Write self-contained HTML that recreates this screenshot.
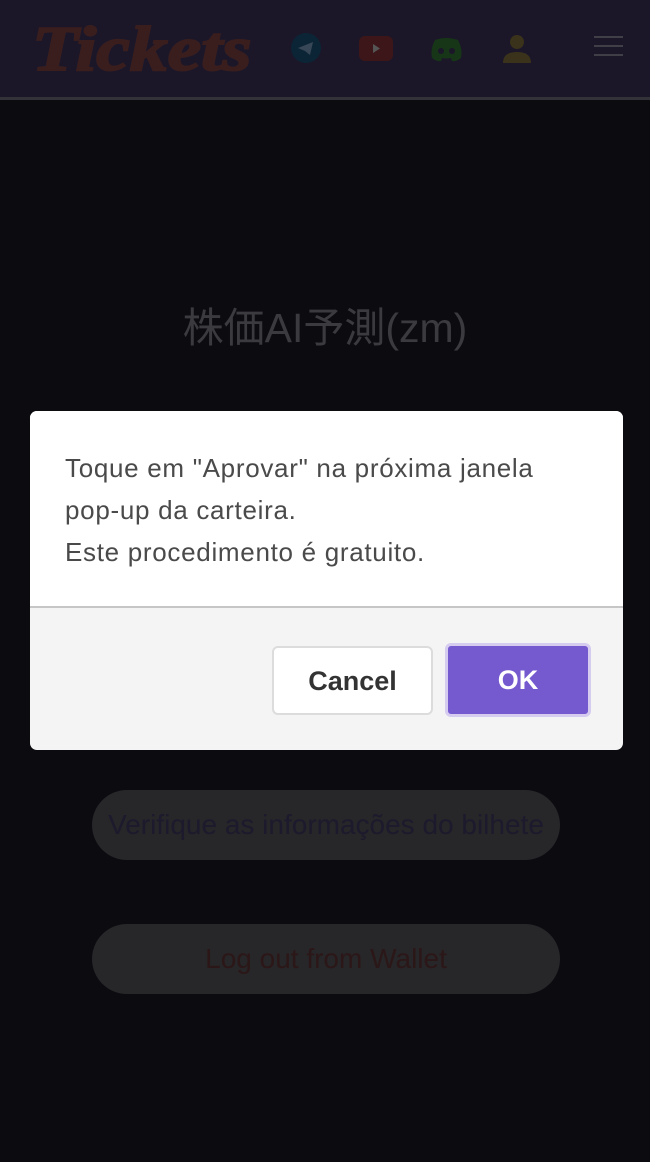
<!DOCTYPE html>
<html><head><meta charset="utf-8"><style>
*{margin:0;padding:0;box-sizing:border-box}
body{width:650px;height:1162px;background:#0c0b10;font-family:"Liberation Sans","Noto Sans CJK JP",sans-serif;position:relative;overflow:hidden}
.hdr{position:absolute;left:0;top:0;width:650px;height:100px;background:#1b1729;border-bottom:3px solid #333238}
.logo{position:absolute;left:32px;top:12px;font-family:"Liberation Serif",serif;font-weight:bold;font-style:italic;font-size:64px;color:#3a1e1e;transform:scaleX(1.18);transform-origin:left;-webkit-text-stroke:2px #3a1e1e}
.title{position:absolute;top:294px;width:650px;text-align:center;font-size:41px;color:#3b3b3f}
.pill{position:absolute;left:92px;width:468px;height:70px;border-radius:35px;background:#272629;text-align:center;line-height:70px;font-size:28px;white-space:nowrap}
.dlg{position:absolute;left:30px;top:411px;width:593px;height:339px;border-radius:7px;overflow:hidden;background:#f4f4f4}
.body{background:#fff;height:197px;border-bottom:2px solid #c6c6c6;padding:36px 35px 0;font-size:26px;letter-spacing:0.7px;line-height:42px;color:#4a4a4a;white-space:nowrap}
.btn{position:absolute;top:235px;height:69px;border-radius:6px;font-size:27px;line-height:67px;text-align:center;font-weight:bold}
</style></head><body>
<div class="hdr">
<div class="logo">Tickets</div>
<svg style="position:absolute;left:290px;top:32px" width="32" height="32"><circle cx="16" cy="16" r="15" fill="#0c2536"/><path d="M8 16 L23 10 L20 23 L15 19 Z" fill="#374757"/></svg>
<svg style="position:absolute;left:359px;top:36px" width="34" height="25"><rect width="34" height="25" rx="6" fill="#3c1618"/><path d="M14 8 L21 12.5 L14 17Z" fill="#555"/></svg>
<svg style="position:absolute;left:430px;top:36px" width="33" height="26"><path d="M5 4 Q16 0 28 4 Q33 13 31 22 Q26 26 22 25 L21 22 Q16 23 12 22 L11 25 Q7 26 2 22 Q0 13 5 4Z" fill="#173517"/><circle cx="11" cy="15" r="3" fill="#1b1729"/><circle cx="22" cy="15" r="3" fill="#1b1729"/></svg>
<svg style="position:absolute;left:502px;top:33px" width="30" height="30"><circle cx="15" cy="9" r="7" fill="#3a321a"/><path d="M1 30 Q1 19 15 19 Q29 19 29 30Z" fill="#3a321a"/></svg>
<div style="position:absolute;left:594px;top:36px;width:29px;height:2px;background:#403e47;box-shadow:0 9px 0 #403e47,0 18px 0 #403e47"></div>
</div>
<div class="title">株価AI予測(zm)</div>
<div class="pill" style="top:790px;color:#1c1a2c">Verifique as informações do bilhete</div>
<div class="pill" style="top:924px;color:#2c1718">Log out from Wallet</div>
<div class="dlg">
<div class="body">Toque em "Aprovar" na próxima janela<br>pop-up da carteira.<br>Este procedimento é gratuito.</div>
<div class="btn" style="left:242px;width:161px;background:#fff;border:2px solid #dcdcdc;color:#333">Cancel</div>
<div class="btn" style="left:415px;width:146px;background:#7559cf;border:3px solid #d6ccf0;color:#fff;top:232px;height:74px;line-height:68px">OK</div>
</div>
</body></html>
